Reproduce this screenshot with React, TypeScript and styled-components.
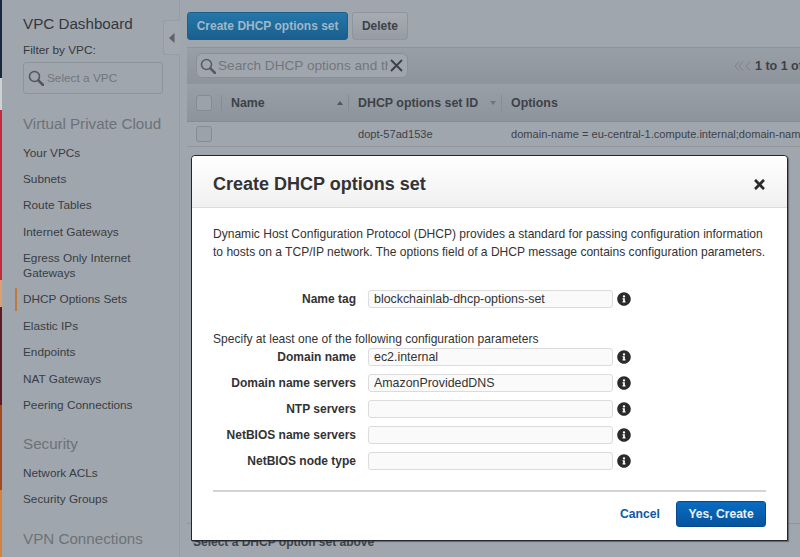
import React from "react";
import styled, { createGlobalStyle } from "styled-components";
import { FaInfoCircle, FaTimes } from "react-icons/fa";

const GlobalStyle = createGlobalStyle`
  html, body {
    margin: 0;
    padding: 0;
    height: 100%;
    overflow: hidden;
    background: #a0a6ad;
    font-family: "Liberation Sans", Arial, sans-serif;
    -webkit-font-smoothing: antialiased;
  }
`;

// Page frame
const Page = styled.div`
  display: flex;
  width: 800px;
  height: 557px;
  overflow: hidden;
  position: relative;
  background: #a0a6ad;
`;

const EdgeStrip = styled.div`
  width: 2px;
  flex: none;
  background: linear-gradient(
    to bottom,
    #18273c 0 78px,
    #cfd2d4 78px 110px,
    #c52a3c 110px 280px,
    #dca06f 280px 307px,
    #5c1c26 307px 405px,
    #a8481f 405px 490px,
    #d5823d 490px 557px
  );
`;

// Sidebar
const Sidebar = styled.aside`
  width: 178px;
  flex: none;
  box-sizing: border-box;
  padding: 14px 0 0 21px;
  border-right: 1px solid #979da4;
  position: relative;
`;

const SideTitle = styled.div`
  font-size: 15.2px;
  line-height: 19px;
  color: #33383d;
`;

const FilterLabel = styled.div`
  margin-top: 10px;
  font-size: 11.8px;
  line-height: 15px;
  color: #33383d;
`;

const VpcSelect = styled.div`
  margin-top: 4px;
  width: 140px;
  height: 32px;
  box-sizing: border-box;
  display: flex;
  align-items: center;
  gap: 3px;
  padding-left: 4px;
  border: 1px solid #8e949b;
  border-radius: 3px;
  font-size: 11.8px;
  color: #70767d;
`;

const SectionTitle = styled.div<{ $gap: number }>`
  margin-top: ${(p) => p.$gap}px;
  font-size: 15.2px;
  line-height: 19px;
  color: #6c7279;
`;

const NavList = styled.ul`
  list-style: none;
  margin: 6.5px 0 0;
  padding: 0;
`;

const NavItem = styled.li<{ $active?: boolean }>`
  position: relative;
  padding: 6px 0 5.4px;
  width: 125px;
  font-size: 11.8px;
  line-height: 15px;
  color: #383d43;

  ${(p) =>
    p.$active &&
    `
    &::before {
      content: "";
      position: absolute;
      left: -8px;
      top: 2px;
      bottom: 2px;
      width: 2px;
      background: #bd7a3c;
    }
  `}
`;

const CollapseTab = styled.div`
  position: absolute;
  right: -1px;
  top: 20px;
  width: 16px;
  height: 33px;
  display: flex;
  align-items: center;
  justify-content: center;
  border: 1px solid #979da4;
  border-right: none;
  border-radius: 3px 0 0 3px;
  background: #a2a8af;
`;

// Main content
const Main = styled.main`
  flex: 1;
  min-width: 0;
  display: flex;
  flex-direction: column;
  padding: 12px 0 0 7px;
`;

const ActionBar = styled.div`
  display: flex;
  gap: 4px;
  height: 28px;
`;

const ActionButton = styled.div<{ $primary?: boolean }>`
  display: flex;
  align-items: center;
  justify-content: center;
  box-sizing: border-box;
  height: 28px;
  padding: 0 8.7px;
  border-radius: 3px;
  font-size: 12px;
  font-weight: 700;
  border: 1px solid ${(p) => (p.$primary ? "#1d5f8c" : "#8f959c")};
  color: ${(p) => (p.$primary ? "#9fb7c9" : "#3d4248")};
  background: ${(p) =>
    p.$primary
      ? "linear-gradient(#2477a8, #195f8e)"
      : "linear-gradient(#a6acb2, #969ca3)"};
`;

const Toolbar = styled.div`
  margin-top: 7px;
  height: 37px;
  box-sizing: border-box;
  display: flex;
  align-items: center;
  justify-content: space-between;
  padding-left: 9px;
  border-top: 1px solid #8e949b;
  border-bottom: 1px solid #8e949b;
  background: linear-gradient(#999fa6, #8e949b);
  white-space: nowrap;
  overflow: hidden;
`;

const SearchBox = styled.div`
  width: 212px;
  height: 25px;
  flex: none;
  box-sizing: border-box;
  display: flex;
  align-items: center;
  gap: 2px;
  padding: 0 4px 0 3px;
  border: 1px solid #8a9097;
  border-radius: 6px;
  background: #a0a6ad;
  font-size: 13.6px;
  color: #71777e;
`;

const SearchText = styled.span`
  flex: 1;
  min-width: 0;
  overflow: hidden;
`;

const Pager = styled.div`
  display: flex;
  align-items: center;
  gap: 3px;
  width: 66px;
  flex: none;
  font-size: 12.5px;
  font-weight: 700;
  color: #3d4248;
`;

const TableHead = styled.div`
  display: grid;
  grid-template-columns: 34px 127px 153px 1fr;
  height: 38px;
  align-items: center;
  box-sizing: border-box;
  border-bottom: 1px solid #868c93;
  background: linear-gradient(#999fa6, #8e949b);
  font-size: 12.4px;
  font-weight: 700;
  color: #3d4248;
  white-space: nowrap;
`;

const HeadCell = styled.div`
  height: 16px;
  display: flex;
  align-items: center;
  justify-content: space-between;
  padding: 0 5px 0 9px;
  border-left: 1px solid #868c93;
`;

const CheckCell = styled.div`
  padding-left: 9px;
`;

const CheckBox = styled.div`
  width: 16px;
  height: 16px;
  box-sizing: border-box;
  border: 1px solid #858b92;
  border-radius: 3px;
  background: #9ca2a9;
`;

const SortArrow = styled.span<{ $up?: boolean }>`
  width: 0;
  height: 0;
  border-left: 3.5px solid transparent;
  border-right: 3.5px solid transparent;
  ${(p) =>
    p.$up
      ? "border-bottom: 4px solid #51565c;"
      : "border-top: 4px solid #70767d;"}
`;

const TableRow = styled.div`
  display: grid;
  grid-template-columns: 34px 127px 153px 1fr;
  height: 24px;
  align-items: center;
  border-bottom: 1px solid #90969d;
  font-size: 11.1px;
  color: #3d4248;
  white-space: nowrap;
  overflow: hidden;
`;

const BodyCell = styled.div`
  padding-left: 10px;
  overflow: visible;
`;

const Spacer = styled.div`
  flex: 1;
`;

const DetailPane = styled.div`
  height: 34px;
  box-sizing: border-box;
  padding: 11px 0 0 6px;
  border-top: 1px solid #8e949b;
  font-size: 12px;
  line-height: 14px;
  font-weight: 700;
  color: #3d4248;
`;

// Modal
const Modal = styled.div`
  position: absolute;
  left: 191px;
  top: 155px;
  width: 597px;
  height: 386px;
  box-sizing: border-box;
  display: flex;
  flex-direction: column;
  background: #fff;
  border: 1px solid #23262a;
  border-radius: 4px 4px 0 0;
  box-shadow: 1px 1px 1px rgba(40, 44, 50, 0.5);
`;

const ModalHeader = styled.div`
  height: 52px;
  flex: none;
  box-sizing: border-box;
  display: flex;
  align-items: center;
  justify-content: space-between;
  padding: 5px 21px 0 21px;
  border-bottom: 1px solid #dcdcdc;
  border-radius: 4px 4px 0 0;
  background: linear-gradient(#ffffff, #f0f0f0);
`;

const ModalTitle = styled.h2`
  margin: 0;
  font-size: 18px;
  font-weight: 700;
  color: #333;
`;

const ModalBody = styled.div`
  flex: 1;
  padding: 17px 21px 0 21px;
  font-size: 12.05px;
  color: #333;
`;

const Intro = styled.p`
  margin: 0;
  line-height: 18px;
  white-space: nowrap;
`;

const FormRow = styled.div<{ $top?: number }>`
  display: grid;
  grid-template-columns: 143px 245px 22px;
  column-gap: 12px;
  align-items: center;
  height: 26px;
  margin-top: ${(p) => p.$top ?? 0}px;
`;

const FieldLabel = styled.label`
  text-align: right;
  font-weight: 700;
  font-size: 12px;
  color: #333;
  white-space: nowrap;
`;

const FieldInput = styled.input`
  width: 245px;
  height: 18px;
  box-sizing: border-box;
  padding: 0 5px;
  border: 1px solid #dcdcdc;
  border-radius: 3px;
  background: #fafafa;
  outline: none;
  font-family: "Liberation Sans", Arial, sans-serif;
  font-size: 12.4px;
  color: #333;
`;

const InfoButton = styled.span`
  display: flex;
  margin-left: -8px;
  color: #2b2b2b;
  font-size: 14px;
`;

const HintLine = styled.div`
  margin: 22px 0 -1px;
  line-height: 11px;
  white-space: nowrap;
`;

const ModalFooter = styled.div`
  flex: none;
  margin: 0 21px;
  display: flex;
  align-items: center;
  justify-content: flex-end;
  gap: 16px;
  border-top: 2px solid #d4d4d4;
  padding: 9px 0 13px;
  height: 26px;
`;

const CancelLink = styled.a`
  font-size: 12.2px;
  font-weight: 700;
  color: #0d5aa7;
`;

const CreateButton = styled.div`
  width: 90px;
  height: 26px;
  display: flex;
  align-items: center;
  justify-content: center;
  border: 1px solid #07488f;
  box-sizing: border-box;
  border-radius: 3px;
  background: linear-gradient(#0a6cc0, #05549f);
  font-size: 12.1px;
  font-weight: 700;
  color: #e8f0f8;
`;

const CloseMark = styled.span`
  display: flex;
  margin-right: -1px;
  color: #2b2b2b;
`;

const SearchGlyph = ({ size, color }: { size: number; color: string }) => (
  <svg width={size} height={size} viewBox="0 0 16 16" style={{ flex: "none" }}>
    <circle cx="6.5" cy="6.5" r="5" fill="none" stroke={color} strokeWidth="1.6" />
    <path d="M10.4 10.4 L15 15" stroke={color} strokeWidth="2.6" strokeLinecap="round" />
  </svg>
);

const sections = [
  {
    title: "Virtual Private Cloud",
    gap: 20,
    items: [
      "Your VPCs",
      "Subnets",
      "Route Tables",
      "Internet Gateways",
      "Egress Only Internet Gateways",
      "DHCP Options Sets",
      "Elastic IPs",
      "Endpoints",
      "NAT Gateways",
      "Peering Connections",
    ],
  },
  { title: "Security", gap: 16, items: ["Network ACLs", "Security Groups"] },
  { title: "VPN Connections", gap: 16, items: [] },
];

const fields = [
  { label: "Domain name", value: "ec2.internal" },
  { label: "Domain name servers", value: "AmazonProvidedDNS" },
  { label: "NTP servers", value: "" },
  { label: "NetBIOS name servers", value: "" },
  { label: "NetBIOS node type", value: "" },
];

export default function App() {
  return (
    <Page>
      <GlobalStyle />
      <EdgeStrip />
      <Sidebar>
        <SideTitle>VPC Dashboard</SideTitle>
        <FilterLabel>Filter by VPC:</FilterLabel>
        <VpcSelect>
          <SearchGlyph size={16} color="#51575d" />
          Select a VPC
        </VpcSelect>
        {sections.map((section) => (
          <React.Fragment key={section.title}>
            <SectionTitle $gap={section.gap}>{section.title}</SectionTitle>
            {section.items.length > 0 && (
              <NavList>
                {section.items.map((item) => (
                  <NavItem key={item} $active={item === "DHCP Options Sets"}>
                    {item}
                  </NavItem>
                ))}
              </NavList>
            )}
          </React.Fragment>
        ))}
        <CollapseTab>
          <svg width="6" height="10" viewBox="0 0 6 10">
            <path d="M5.5 0 V10 L0 5 Z" fill="#5d6369" />
          </svg>
        </CollapseTab>
      </Sidebar>
      <Main>
        <ActionBar>
          <ActionButton $primary>Create DHCP options set</ActionButton>
          <ActionButton>Delete</ActionButton>
        </ActionBar>
        <Toolbar>
          <SearchBox>
            <SearchGlyph size={16} color="#575d63" />
            <SearchText>Search DHCP options and their</SearchText>
            <svg width="13" height="13" viewBox="0 0 13 13" style={{ flex: "none" }}>
              <path d="M1 1 L12 12 M12 1 L1 12" stroke="#3d4248" strokeWidth="1.9" />
            </svg>
          </SearchBox>
          <Pager>
            <svg width="18" height="10" viewBox="0 0 18 10" style={{ flex: "none" }}>
              <path d="M5 0.5 L1 5 L5 9.5 M9 0.5 L5 5 L9 9.5" fill="none" stroke="#7d838a" />
              <path d="M16 0.5 L12 5 L16 9.5" fill="none" stroke="#7d838a" />
            </svg>
            <span>1 to 1 of 1</span>
          </Pager>
        </Toolbar>
        <TableHead>
          <CheckCell>
            <CheckBox />
          </CheckCell>
          <HeadCell>
            Name
            <SortArrow $up />
          </HeadCell>
          <HeadCell>
            DHCP options set ID
            <SortArrow />
          </HeadCell>
          <HeadCell>Options</HeadCell>
        </TableHead>
        <TableRow>
          <CheckCell>
            <CheckBox />
          </CheckCell>
          <BodyCell />
          <BodyCell>dopt-57ad153e</BodyCell>
          <BodyCell>domain-name = eu-central-1.compute.internal;domain-name-servers</BodyCell>
        </TableRow>
        <Spacer />
        <DetailPane>Select a DHCP option set above</DetailPane>
      </Main>
      <Modal>
        <ModalHeader>
          <ModalTitle>Create DHCP options set</ModalTitle>
          <CloseMark>
            <FaTimes size={15} />
          </CloseMark>
        </ModalHeader>
        <ModalBody>
          <Intro>
            Dynamic Host Configuration Protocol (DHCP) provides a standard for passing configuration information
            <br />
            to hosts on a TCP/IP network. The options field of a DHCP message contains configuration parameters.
          </Intro>
          <FormRow $top={25}>
            <FieldLabel>Name tag</FieldLabel>
            <FieldInput readOnly value="blockchainlab-dhcp-options-set" />
            <InfoButton>
              <FaInfoCircle />
            </InfoButton>
          </FormRow>
          <HintLine>Specify at least one of the following configuration parameters</HintLine>
          {fields.map((field) => (
            <FormRow key={field.label}>
              <FieldLabel>{field.label}</FieldLabel>
              <FieldInput readOnly value={field.value} />
              <InfoButton>
                <FaInfoCircle />
              </InfoButton>
            </FormRow>
          ))}
        </ModalBody>
        <ModalFooter>
          <CancelLink>Cancel</CancelLink>
          <CreateButton>Yes, Create</CreateButton>
        </ModalFooter>
      </Modal>
    </Page>
  );
}
